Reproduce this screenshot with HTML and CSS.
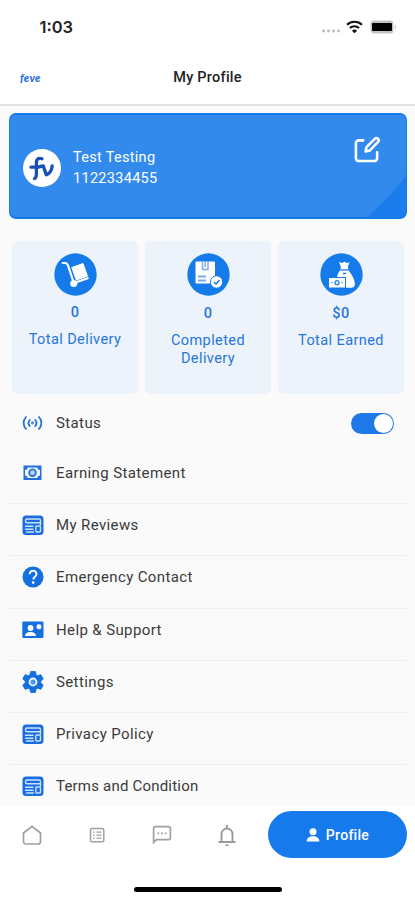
FILE: index.html
```html
<!DOCTYPE html>
<html lang="en">
<head>
<meta charset="utf-8">
<title>My Profile</title>
<link rel="stylesheet" href="styles.css">
</head>
<body>
<svg class="defs" aria-hidden="true">
  <symbol id="doc" viewBox="0 0 22 21">
    <rect x="0.5" y="0.5" width="21" height="19.5" rx="3.5" fill="#1b6ce2"/>
    <g fill="none" stroke="#c9e2ff" stroke-width="1.4" stroke-linejoin="round" stroke-linecap="round">
      <path d="M18.500 10V5.500A1.500 1.500 0 0 0 17 4H5a1.500 1.500 0 0 0-1.500 1.500v.8A1.500 1.500 0 0 0 5 7.800h13.500"/>
      <path d="M3.500 11.300h7.500M3.500 14.200h7.500M4.500 17h7"/>
      <rect x="13.800" y="11" width="4.700" height="6" rx="1"/>
    </g>
  </symbol>
</svg>
<div class="screen">
  <div class="status-bar">
    <span class="time">1:03</span>
    <div class="indicators">
      <svg class="dots" width="20" height="4" viewBox="0 0 20 4" fill="#b9b9b9"><circle cx="2.5" cy="2" r="1.4"/><circle cx="7.5" cy="2" r="1.4"/><circle cx="12.5" cy="2" r="1.4"/><circle cx="17.5" cy="2" r="1.4"/></svg>
      <svg class="wifi" width="17" height="14" viewBox="0 0 17 14" fill="none" stroke="#111" stroke-width="2"><path d="M1 4.7a10.8 10.8 0 0 1 15 0M3.9 8a6.7 6.7 0 0 1 9.2 0"/><path d="M8.5 13.3 5.9 10.7a3.8 3.8 0 0 1 5.2 0z" fill="#111" stroke="none"/></svg>
      <svg class="battery" width="27" height="14" viewBox="0 0 27 14"><rect x=".5" y=".5" width="23" height="13" rx="3.5" fill="#c4c4c4"/><rect x="2" y="3" width="20" height="8" rx="1" fill="#000"/><path d="M25 4.5q1.6 2.5 0 5z" fill="#999"/></svg>
    </div>
  </div>
  <header class="header">
    <span class="brand">feve</span>
    <h1>My Profile</h1>
  </header>
  <main class="content">
    <section class="user-card">
      <div class="avatar">
        <svg width="38" height="38" viewBox="0 0 38 38" fill="none" stroke="#1650b8" stroke-width="3.300" stroke-linecap="round" stroke-linejoin="round"><path d="M19 9.800c-3.600-1.300-5.600.2-5.600 4.200v10.500c0 3.200-.7 4.700-1.900 5M8 18.200h6.500c2-.2 3.500-1.200 5.800-1.200l2.900 8.800c3-.8 5.500-4.500 6-8.800"/></svg>
      </div>
      <div class="user-info"><span>Test Testing</span><span class="phone">1122334455</span></div>
      <svg class="edit" width="27" height="27" viewBox="0 0 28 28" fill="none" stroke="#fff" stroke-width="2.700" stroke-linecap="round" stroke-linejoin="round"><path d="M9.500 4.500H5a3 3 0 0 0-3 3V23a3 3 0 0 0 3 3h16a3 3 0 0 0 3-3v-6"/><path d="M12 16l1-4.500L21.500 3a2.300 2.300 0 0 1 3.400 3.200L16.500 15z"/></svg>
    </section>
    <section class="stats">
      <div class="stat first">
        <svg class="disc" viewBox="0 0 43 43"><circle cx="21.500" cy="21.500" r="21.200" fill="#157bea"/><path d="M8.800 10h2.600c1.600.2 2.400 1.500 2.900 3.300L19.500 29" fill="none" stroke="#fff" stroke-width="2.200" stroke-linecap="round"/><path d="M17.800 14.500 29 10.500l4.500 12.700-11.200 3.800z" fill="#fff" stroke="#fff" stroke-linejoin="round"/><circle cx="19.700" cy="30.600" r="3.500" fill="#fff"/><path d="m20 30 13.700-4.800" stroke="#fff" stroke-width="2.200" stroke-linecap="round"/></svg>
        <strong>0</strong><span>Total Delivery</span>
      </div>
      <div class="stat">
        <svg class="disc" viewBox="0 0 43 43"><circle cx="21.500" cy="21.500" r="21.200" fill="#157bea"/><rect x="8.500" y="8.500" width="19.500" height="22" rx="1" fill="#fff"/><path d="M15.500 8.500v8h5.500v-8M18.200 8.500V14" fill="none" stroke="#7ba7ef" stroke-width="1.400"/><path d="M11 23.500h8M11 27.500h8" stroke="#7ba7ef" stroke-width="1.800"/><circle cx="29.500" cy="29" r="6.200" fill="#fff" stroke="#157bea"/><path d="m26.800 29 2.200 2 3.500-4" fill="none" stroke="#157bea" stroke-width="1.500"/></svg>
        <strong>0</strong><span>Completed<br>Delivery</span>
      </div>
      <div class="stat">
        <svg class="disc" viewBox="0 0 43 43"><circle cx="21.500" cy="21.500" r="21.200" fill="#157bea"/><path d="m19 9 3 1 2.500-1.300 2.500 1.300 2.500-1-1.700 5 .7 2.200h-8.200L21 14z" fill="#fff"/><path d="M20 17.500h8.500c2.700 3 6 8.500 6.300 12.500.3 3.500-1.300 4.800-4 4.800H17V24c.5-2.500 1.600-5 3-6.500z" fill="#fff"/><rect x="8.500" y="24.500" width="17" height="10.500" fill="#fff" stroke="#157bea"/><circle cx="17" cy="29.700" r="2" fill="none" stroke="#157bea" stroke-width="1.200"/><path d="M11.500 29.700h1M21.500 29.700h1M23 20.500h3" stroke="#157bea" stroke-width="1.300"/></svg>
        <strong>$0</strong><span>Total Earned</span>
      </div>
    </section>
    <nav class="menu">
      <div class="row status-row">
        <svg width="22" height="22" viewBox="0 0 22 22" fill="none" stroke="#2873d6" stroke-width="1.800" stroke-linecap="round"><path d="M4 5a8.800 8.800 0 0 0 0 12M17 5a8.800 8.800 0 0 1 0 12M7.800 8a4.500 4.500 0 0 0 0 6M13.200 8a4.500 4.500 0 0 1 0 6"/><circle cx="10.500" cy="11" r=".5"/></svg>
        <span>Status</span><span class="toggle"></span>
      </div>
      <div class="row"><svg width="22" height="22" viewBox="0 0 22 22"><rect x="1.500" y="3.500" width="18" height="14.500" fill="#2171dc"/><path d="M5.500 5.500h10A2.500 2.500 0 0 0 18 8v5.500a2.500 2.500 0 0 0-2.500 2.500h-10A2.500 2.500 0 0 0 3 13.500V8a2.500 2.500 0 0 0 2.500-2.500z" fill="#f3f8ff"/><circle cx="10.500" cy="10.700" r="3.300" fill="#bdd9ff" stroke="#2171dc" stroke-width="1.800"/></svg><span>Earning Statement</span></div>
      <div class="row"><svg width="22" height="21"><use href="#doc"/></svg><span>My Reviews</span></div>
      <div class="row"><svg width="22" height="22" viewBox="0 0 22 22"><circle cx="11" cy="11" r="10.500" fill="#146fdf"/><path d="M7.700 8.200a3.400 3.400 0 0 1 6.800 0c0 2.400-3.300 2.600-3.300 5.400" fill="none" stroke="#fff" stroke-width="1.900"/><circle cx="11.200" cy="16.600" r="1.300" fill="#fff"/></svg><span>Emergency Contact</span></div>
      <div class="row"><svg width="22" height="22" viewBox="0 0 22 22"><rect x=".3" y="2.500" width="21.200" height="16.500" rx="1.300" fill="#146fdf"/><circle cx="8.500" cy="9" r="2.900" fill="#fff"/><path d="M3 17c0-5.300 11-5.300 11 0z" fill="#fff"/><path d="M17 4.700l.8 1 1.300-.1-.1 1.300 1 .9-1 .8.100 1.300-1.300-.1-.8 1-.8-1-1.300.100.100-1.300-1-.8 1-.9-.1-1.300 1.300.100z" fill="#fff"/></svg><span>Help &amp; Support</span></div>
      <div class="row"><svg width="24" height="24" viewBox="1 1 22 22"><path fill="#146fdf" stroke="#146fdf" stroke-width=".8" d="M19.140 12.940c.04-.3.060-.61.060-.94s-.02-.64-.07-.94l2.030-1.580c.18-.14.230-.41.120-.61l-1.920-3.320c-.12-.22-.37-.29-.59-.22l-2.390.96c-.5-.38-1.030-.7-1.620-.94L14.400 2.810c-.04-.24-.24-.41-.48-.41h-3.840c-.24 0-.43.170-.47.410L9.250 5.350c-.59.240-1.130.570-1.620.940L5.240 5.330c-.22-.08-.47 0-.59.220L2.740 8.870c-.12.210-.08.470.12.610l2.030 1.580c-.05.300-.09.630-.09.940s.02.640.070.940l-2.030 1.580c-.18.140-.23.410-.12.610l1.920 3.320c.12.220.37.290.59.220l2.390-.96c.5.380 1.030.7 1.620.94l.36 2.540c.05.240.24.410.48.410h3.840c.24 0 .44-.17.470-.41l.36-2.540c.59-.24 1.130-.56 1.620-.94l2.390.96c.22.080.47 0 .59-.22l1.920-3.320c.12-.22.070-.47-.12-.61z"/><circle cx="12" cy="12" r="3.200" fill="#4b98f0" stroke="#eef6ff" stroke-width="1.700"/></svg><span>Settings</span></div>
      <div class="row"><svg width="22" height="21"><use href="#doc"/></svg><span>Privacy Policy</span></div>
      <div class="row last"><svg width="22" height="21"><use href="#doc"/></svg><span>Terms and Condition</span></div>
    </nav>
  </main>
  <footer class="tabs">
    <div class="tab-row">
      <div class="tab-icons">
      <svg width="20" height="20" viewBox="0 0 20 20" fill="none" stroke="#a0a0a0" stroke-width="1.700" stroke-linejoin="round"><path d="M1.500 8 10 1.300 18.500 8v8.500a2.500 2.500 0 0 1-2.500 2.500H4a2.500 2.500 0 0 1-2.500-2.500z"/></svg>
      <svg width="20" height="20" viewBox="0 0 20 20" fill="none" stroke="#a0a0a0" stroke-width="1.500"><rect x="3.500" y="3.500" width="13.300" height="13.300" rx="1.600"/><path d="M6 7.200h1.500M6 10.200h1.500M6 13.200h1.500M9.500 7.200h5M9.500 10.200h5M9.500 13.200h5" stroke-width="1.200"/></svg>
      <svg width="20" height="20" viewBox="0 0 20 20" fill="none" stroke="#a0a0a0" stroke-width="1.700"><path d="M1.600 17.500V3.500A1.800 1.800 0 0 1 3.400 1.700h13.200a1.800 1.800 0 0 1 1.800 1.800v9.400a1.800 1.800 0 0 1-1.800 1.800H4.400z"/><path d="M5.500 8.300h1.800M9.100 8.300h1.800M12.700 8.300h1.800"/></svg>
      <svg width="20" height="24" viewBox="0 0 20 24" fill="none" stroke="#9a9a9a" stroke-width="1.900"><path d="M1.500 19h17M4.500 19v-8a5.500 5.500 0 0 1 11 0v8M10 5.500V2"/><path d="M8 21.500h4a2 1.500 0 0 1-4 0z" fill="#9a9a9a" stroke="none"/></svg>
      </div>
      <div class="tab-active"><svg width="14" height="14" viewBox="0 0 14 14" fill="#fff"><circle cx="7" cy="3.800" r="3.500"/><path d="M.6 13.600c0-7 12.800-7 12.800 0z"/></svg><span>Profile</span></div>
    </div>
    <div class="home-bar"></div>
  </footer>
</div>
</body>
</html>
```
FILE: styles.css
```css
* { box-sizing: border-box; }
body { margin: 0; font-family: Roboto, "Liberation Sans", sans-serif; }
.defs { display: none; }
.screen { width: 415px; height: 900px; overflow: hidden; display: flex; flex-direction: column; background: #fff; }
.status-bar { height: 54px; flex: none; display: flex; justify-content: space-between; padding: 0 18px 0 39.500px; align-items: center; }
.time { font-family: Inter, sans-serif; font-weight: 600; font-size: 16.500px; color: #222; }
.indicators { display: flex; align-items: center; }
.dots { margin: 8px 5px 0 0; }
.wifi { margin-right: 7px; }
.header { height: 52px; flex: none; border-bottom: 2px solid #e1e1e1; display: grid; grid-template-columns: 1fr auto 1fr; align-items: center; padding: 0 20px 4px; }
.brand { font-family: Lato, sans-serif; font-size: 11px; font-style: italic; font-weight: 900; color: #2b6ce0; letter-spacing: .3px; }
h1 { margin: 0; font-size: 14.500px; font-weight: 500; color: #222; letter-spacing: .25px; }
.content { flex: 1; min-height: 0; overflow: hidden; background: #fafafa; padding: 7px 8px 0 9px; }
.user-card { height: 106px; border: 1px solid #167ae6; border-width: 2px 1px; border-radius: 7px; padding: 0 25px 0 13px; display: flex; align-items: center; color: #fff; background: linear-gradient(#328aed, #328aed) 0 0 / 250px 100% no-repeat, radial-gradient(circle at 210px -75px, #328aed 0 229px, #1b7ded 231px); }
.avatar { width: 38px; height: 38px; border-radius: 50%; background: #fff; margin-top: 3px; }
.user-info { flex: 1; margin: 3px 0 0 12px; display: flex; flex-direction: column; font-size: 14.500px; line-height: 21px; letter-spacing: .3px; }
.edit { align-self: flex-start; margin-top: 21px; }
.stats { display: grid; grid-template-columns: repeat(3, 1fr); gap: 7px; padding: 0 3px; margin-top: 22px; height: 153px; }
.stat { background: #edf3fa; border-radius: 6px; padding-top: 12px; display: flex; flex-direction: column; align-items: center; text-align: center; color: #2676db; font-size: 14.500px; letter-spacing: .42px; }
.disc { width: 43px; height: 43px; }
.stat strong { font-weight: 500; line-height: 18px; margin-top: 9px; }
.stat span { line-height: 18px; margin-top: 9px; }
.first strong { margin-top: 8px; }
.menu { padding-top: 8px; }
.row { height: 52.200px; border-bottom: 1px solid #edf1f2; display: flex; align-items: center; padding: 0 13px 9px 13px; color: #3a3a3a; font-size: 15px; letter-spacing: .38px; }
.row svg { flex: none; }
.row svg + span { width: 190px; margin-left: 12px; }
.row svg[width="24"] { margin: 0 -1px; }
.status-row { height: 50px; border: 0; padding-bottom: 8px; }
.last { letter-spacing: .2px; }
.toggle { margin-left: auto; width: 43px; height: 21px; border-radius: 11px; background: #2079e8; display: flex; justify-content: flex-end; padding: 1px; }
.toggle::after { content: ""; width: 19px; height: 19px; border-radius: 50%; background: #fff; }
.tabs { height: 94px; flex: none; background: #fff; padding: 5px 8px 8px 22px; display: flex; flex-direction: column; justify-content: space-between; }
.tab-row { display: flex; justify-content: space-between; height: 47px; align-items: center; }
.tab-icons { display: flex; width: 215px; align-items: center; justify-content: space-between; }
.tab-active { width: 139px; height: 47px; border-radius: 24px; background: #177aec; color: #fff; display: flex; align-items: center; justify-content: center; gap: 6px; font-size: 14px; font-weight: 500; letter-spacing: .3px; }
.home-bar { width: 148px; height: 5px; border-radius: 3px; background: #000; margin-left: 112px; }
```
